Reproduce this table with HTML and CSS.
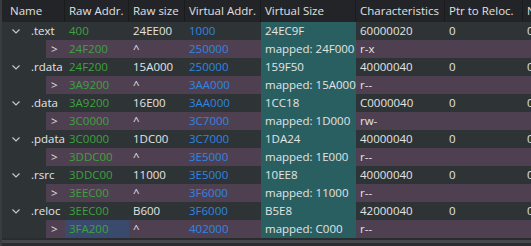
FILE: index.html
```html
<!DOCTYPE html>
<html>
<head>
<meta charset="utf-8">
<link rel="stylesheet" href="styles.css">
</head>
<body>
<div class="table">
  <div class="row head">
    <div class="c name">Name</div>
    <div class="c">Raw Addr.</div>
    <div class="c">Raw size</div>
    <div class="c">Virtual Addr.</div>
    <div class="c">Virtual Size</div>
    <div class="c">Characteristics</div>
    <div class="c">Ptr to Reloc.</div>
    <div class="c">Num. of Reloc.</div>
  </div>

  <div class="row sec">
    <div class="c name"><svg class="chev" width="8" height="5" viewBox="0 0 8 5"><polyline points="0.5,0.5 4,4 7.5,0.5" fill="none" stroke="#c8c8c8" stroke-width="1.2"/></svg>.text</div>
    <div class="c g">400</div><div class="c">24EE00</div><div class="c b">1000</div><div class="c vs">24EC9F</div><div class="c">60000020</div><div class="c">0</div><div class="c">0</div>
  </div>
  <div class="row sub">
    <div class="c name"><span class="ind"></span><span class="arr">&gt;</span></div>
    <div class="c g">24F200</div><div class="c">^</div><div class="c b">250000</div><div class="c vs">mapped: 24F000</div><div class="c">r-x</div><div class="c"></div><div class="c"></div>
  </div>

  <div class="row sec">
    <div class="c name"><svg class="chev" width="8" height="5" viewBox="0 0 8 5"><polyline points="0.5,0.5 4,4 7.5,0.5" fill="none" stroke="#c8c8c8" stroke-width="1.2"/></svg>.rdata</div>
    <div class="c g">24F200</div><div class="c">15A000</div><div class="c b">250000</div><div class="c vs">159F50</div><div class="c">40000040</div><div class="c">0</div><div class="c">0</div>
  </div>
  <div class="row sub">
    <div class="c name"><span class="ind"></span><span class="arr">&gt;</span></div>
    <div class="c g">3A9200</div><div class="c">^</div><div class="c b">3AA000</div><div class="c vs">mapped: 15A000</div><div class="c">r--</div><div class="c"></div><div class="c"></div>
  </div>

  <div class="row sec">
    <div class="c name"><svg class="chev" width="8" height="5" viewBox="0 0 8 5"><polyline points="0.5,0.5 4,4 7.5,0.5" fill="none" stroke="#c8c8c8" stroke-width="1.2"/></svg>.data</div>
    <div class="c g">3A9200</div><div class="c">16E00</div><div class="c b">3AA000</div><div class="c vs">1CC18</div><div class="c">C0000040</div><div class="c">0</div><div class="c">0</div>
  </div>
  <div class="row sub">
    <div class="c name"><span class="ind"></span><span class="arr">&gt;</span></div>
    <div class="c g">3C0000</div><div class="c">^</div><div class="c b">3C7000</div><div class="c vs">mapped: 1D000</div><div class="c">rw-</div><div class="c"></div><div class="c"></div>
  </div>

  <div class="row sec">
    <div class="c name"><svg class="chev" width="8" height="5" viewBox="0 0 8 5"><polyline points="0.5,0.5 4,4 7.5,0.5" fill="none" stroke="#c8c8c8" stroke-width="1.2"/></svg>.pdata</div>
    <div class="c g">3C0000</div><div class="c">1DC00</div><div class="c b">3C7000</div><div class="c vs">1DA24</div><div class="c">40000040</div><div class="c">0</div><div class="c">0</div>
  </div>
  <div class="row sub">
    <div class="c name"><span class="ind"></span><span class="arr">&gt;</span></div>
    <div class="c g">3DDC00</div><div class="c">^</div><div class="c b">3E5000</div><div class="c vs">mapped: 1E000</div><div class="c">r--</div><div class="c"></div><div class="c"></div>
  </div>

  <div class="row sec">
    <div class="c name"><svg class="chev" width="8" height="5" viewBox="0 0 8 5"><polyline points="0.5,0.5 4,4 7.5,0.5" fill="none" stroke="#c8c8c8" stroke-width="1.2"/></svg>.rsrc</div>
    <div class="c g">3DDC00</div><div class="c">11000</div><div class="c b">3E5000</div><div class="c vs">10EE8</div><div class="c">40000040</div><div class="c">0</div><div class="c">0</div>
  </div>
  <div class="row sub">
    <div class="c name"><span class="ind"></span><span class="arr">&gt;</span></div>
    <div class="c g">3EEC00</div><div class="c">^</div><div class="c b">3F6000</div><div class="c vs">mapped: 11000</div><div class="c">r--</div><div class="c"></div><div class="c"></div>
  </div>

  <div class="row sec">
    <div class="c name"><svg class="chev" width="8" height="5" viewBox="0 0 8 5"><polyline points="0.5,0.5 4,4 7.5,0.5" fill="none" stroke="#c8c8c8" stroke-width="1.2"/></svg>.reloc</div>
    <div class="c g">3EEC00</div><div class="c">B600</div><div class="c b">3F6000</div><div class="c vs">B5E8</div><div class="c">42000040</div><div class="c">0</div><div class="c">0</div>
  </div>
  <div class="row sub">
    <div class="c name"><span class="ind"></span><span class="arr">&gt;</span></div>
    <div class="c g sel">3FA200</div><div class="c">^</div><div class="c b">402000</div><div class="c vs">mapped: C000</div><div class="c">r--</div><div class="c"></div><div class="c"></div>
  </div>
  <div class="foot"></div>
</div>
</body>
</html>
```

FILE: styles.css
```css
html, body {
  margin: 0;
  padding: 0;
  background: #2a2c2e;
  overflow: hidden;
}
.table {
  width: 531px;
  height: 246px;
  overflow: hidden;
  font-family: "Open Sans", "Noto Sans", sans-serif;
  font-size: 11.5px;
  color: #e4e4e4;
  border-left: 2px solid #3a3d40;
  box-sizing: border-box;
}
.row {
  display: grid;
  grid-template-columns: 63px 64px 56px 76px 95px 89px 78px 80px;
  height: 18px;
  width: 601px;
  margin-left: -0px;
}
.c {
  display: flex;
  align-items: center;
  padding-left: 4px;
  white-space: nowrap;
  overflow: hidden;
  line-height: 18px;
}
.head {
  height: 22px;
  background: #222427;
  color: #e0e0e0;
}
.head .c {
  border-right: 1px solid #1a1b1d;
  line-height: 22px;
  padding-left: 4px;
}
.head .name {
  padding-left: 8px;
}
.sec {
  background: #2e3336;
}
.sub {
  background: #4e4050;
}
.sub .name {
  padding-left: 0;
}
.ind {
  display: block;
  width: 44px;
  height: 18px;
  background: #2e3336;
  flex: none;
}
.arr {
  margin-left: 5px;
  color: #e0e0e0;
}
.sec .name {
  padding-left: 10px;
}
.chev {
  margin-right: 11px;
  flex: none;
}
.g { color: #3ea23e; }
.b { color: #2f86e0; }
.vs { background: #2a5f61; }
.sel { background: #3a4a6c; }
.foot {
  height: 3px;
  margin-top: 2px;
  background: #45484b;
}
```
